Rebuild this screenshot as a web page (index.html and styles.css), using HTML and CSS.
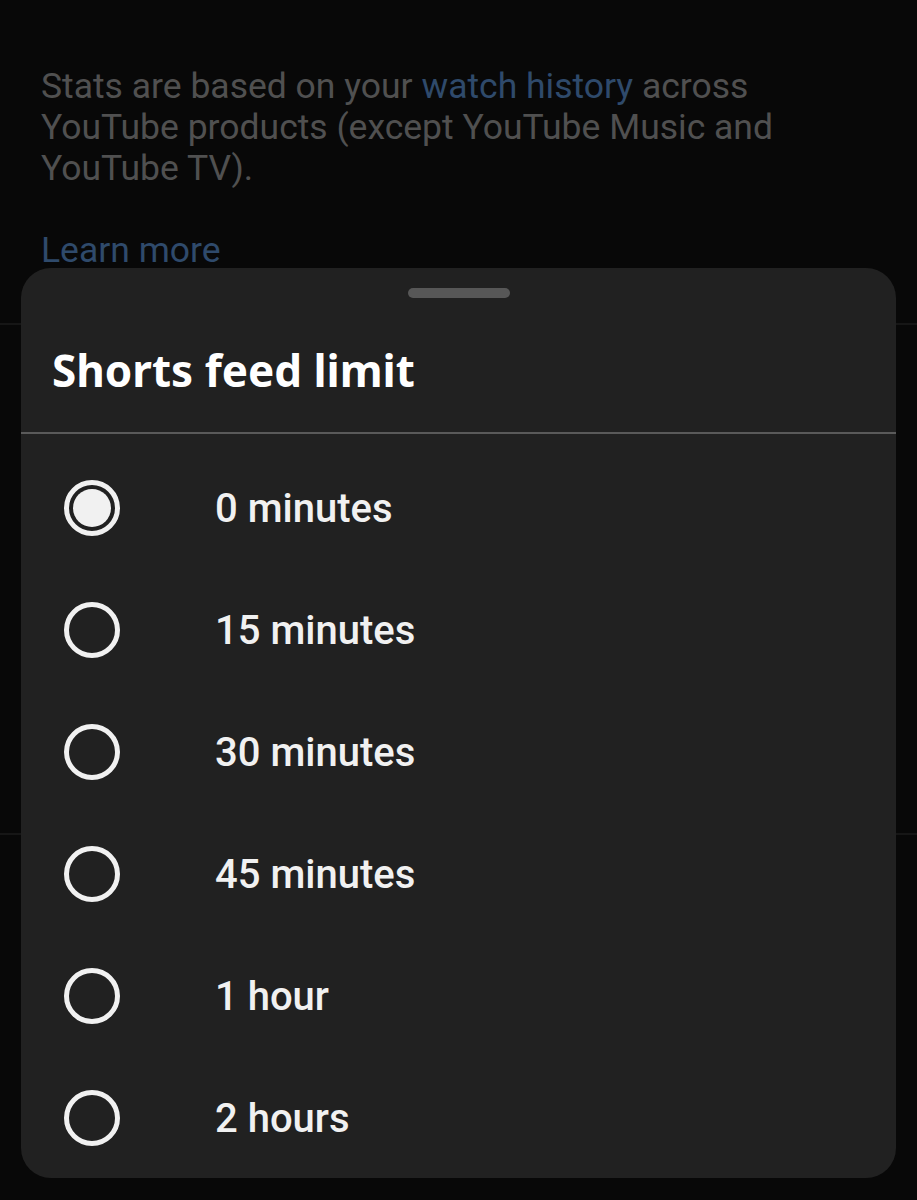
FILE: index.html
```html
<!DOCTYPE HTML>
<html lang="en">
  <head>
    <title>Shorts feed limit</title>
    <meta charset="utf-8">
    <link rel="stylesheet" href="styles.css">
  </head>
  <body>

  <div id="page">
    <div class="stats">
      <p>Stats are based on your <a href="#">watch history</a> across YouTube products (except YouTube Music and YouTube TV).</p>
      <a class="learn" href="#">Learn more</a>
    </div>
    <div class="section"></div>
    <div class="section last"></div>
  </div>

  <div id="sheet">
    <div class="handle"></div>
    <div class="title">Shorts feed limit</div>
    <ul class="options">
      <li class="option active"><span class="radio"></span>0 minutes</li>
      <li class="option"><span class="radio"></span>15 minutes</li>
      <li class="option"><span class="radio"></span>30 minutes</li>
      <li class="option"><span class="radio"></span>45 minutes</li>
      <li class="option"><span class="radio"></span>1 hour</li>
      <li class="option"><span class="radio"></span>2 hours</li>
    </ul>
  </div>

  </body>
</html>
```

FILE: styles.css
```css
html {
  height: 100%;
}
body {
  margin: 0;
  padding: 0;
  background: #080808;
  color: #ffffff;
  font-family: Roboto, "Liberation Sans", sans-serif;
  height: 100%;
  overflow: hidden;
  position: relative;
}

#page {
  padding-top: 66px;
}

.stats {
  padding: 0 136px 48px 41px;
  height: 209px;
  border-bottom: 2px solid #161616;
}
.stats p {
  margin: 0;
  font-size: 35.5px;
  line-height: 41px;
  color: #505050;
}
.stats a {
  color: #2f4a6b;
  text-decoration: none;
}
.stats .learn {
  display: block;
  margin-top: 41px;
  font-size: 35.5px;
  line-height: 41px;
}

.section {
  height: 508px;
  border-bottom: 2px solid #161616;
}
.section.last {
  height: 300px;
  border-bottom: none;
}

#sheet {
  position: absolute;
  left: 21px;
  right: 21px;
  top: 268px;
  height: 910px;
  background: #212121;
  border-radius: 30px;
  overflow: hidden;
}

.handle {
  width: 102px;
  height: 10px;
  margin: 20px auto 0;
  border-radius: 5px;
  background: #575757;
}

.title {
  padding: 42px 31px 0;
  height: 136px;
  box-sizing: border-box;
  font-family: "Noto Sans", sans-serif;
  font-weight: 700;
  font-size: 44px;
  line-height: 60px;
  color: #ffffff;
  border-bottom: 2px solid #5a5a5a;
}

.options {
  list-style: none;
  margin: 0;
  padding: 13px 0 0;
}

.option {
  display: flex;
  align-items: center;
  height: 122px;
  padding-left: 43px;
  font-size: 40px;
  font-weight: 500;
  color: #f1f1f1;
}

.radio {
  width: 46px;
  height: 46px;
  border: 5px solid #f1f1f1;
  border-radius: 50%;
  margin-right: 95px;
  flex: none;
  position: relative;
}

.option.active .radio::after {
  content: "";
  position: absolute;
  left: 4px;
  top: 4px;
  width: 38px;
  height: 38px;
  border-radius: 50%;
  background: #f1f1f1;
}
```
